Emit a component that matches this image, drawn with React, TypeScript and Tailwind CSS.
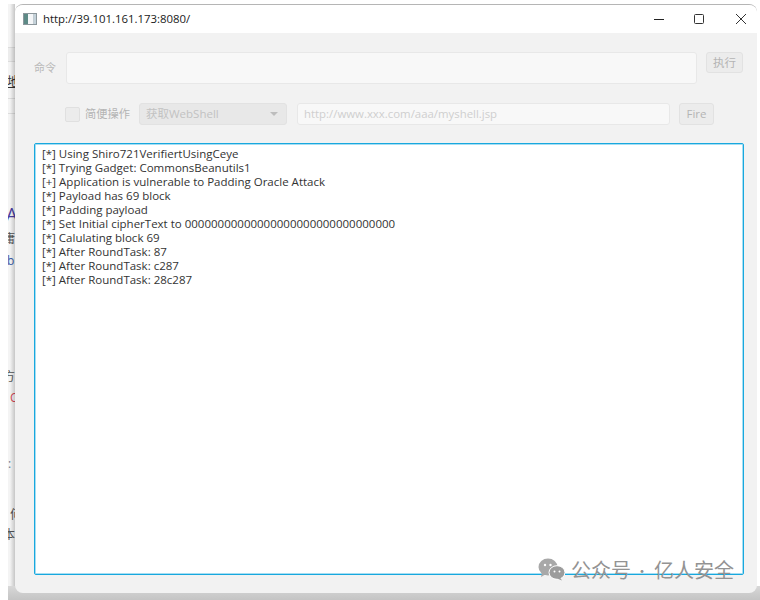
const LINES = [
  "[*] Using Shiro721VerifiertUsingCeye",
  "[*] Trying Gadget: CommonsBeanutils1",
  "[+] Application is vulnerable to Padding Oracle Attack",
  "[*] Payload has 69 block",
  "[*] Padding payload",
  "[*] Set Initial cipherText to 00000000000000000000000000000000",
  "[*] Calulating block 69",
  "[*] After RoundTask: 87",
  "[*] After RoundTask: c287",
  "[*] After RoundTask: 28c287",
];

const FONT = "font-['Open_Sans','Noto_Sans','Noto_Sans_CJK_SC',sans-serif]";

function Scrap({ className, children }: { className: string; children: string }) {
  return <span className={`absolute text-[12px] leading-[14px] ${className}`}>{children}</span>;
}

export default function App() {
  return (
    <div className={`relative h-[600px] w-[760px] overflow-hidden bg-white pl-[8px] ${FONT}`}>
      <div className="relative h-full w-full pb-[7px] pl-[7px] pr-[3px] pt-[4px]">
        <div className="absolute bottom-0 left-0 top-[4px] w-[7px] overflow-hidden bg-[#f4f4f4]">
          <div className="absolute left-0 right-0 top-[43px] h-[15px] border-y border-[#dcdcdc] bg-[#ececec]" />
          <div className="absolute left-0 right-0 top-[94px] h-[16px] border-y border-[#dcdcdc]" />
          <Scrap className="left-[-1px] top-[71px] text-[#333] underline">地</Scrap>
          <Scrap className="left-[-2px] top-[200px] text-[18px] leading-[20px] text-[#4b3fa0]">A</Scrap>
          <Scrap className="left-[-5px] top-[228px] text-[#555]">庸</Scrap>
          <Scrap className="left-[-1px] top-[250px] text-[#3b5ca8]">b</Scrap>
          <Scrap className="left-[-5px] top-[366px] text-[#555]">方</Scrap>
          <Scrap className="left-[2px] top-[387px] text-[#d84a5a]">C</Scrap>
          <Scrap className="left-[0px] top-[453px] text-[#6a7a90]">:</Scrap>
          <Scrap className="left-[2px] top-[504px] text-[#555]">何</Scrap>
          <Scrap className="left-[-5px] top-[524px] text-[#555]">本</Scrap>
          <div className="absolute inset-y-0 right-0 w-[5px] bg-gradient-to-r from-transparent to-[#00000030]" />
        </div>
        <div className="absolute bottom-0 left-0 right-0 h-[14px] bg-gradient-to-b from-[#d8d8d8] to-[#c4c4c4]" />
        <div className="relative flex h-full flex-col overflow-hidden rounded-[8px] border-t border-[#b5b5b5] bg-[#f2f2f2]">
          <div className="flex h-[28px] shrink-0 items-center bg-white pl-[8px]">
            <svg width="14" height="12" viewBox="0 0 14 12" className="mr-[6px]">
              <rect x="0" y="0" width="14" height="12" fill="#8c979c" />
              <rect x="1" y="1" width="4" height="10" fill="#5d8a86" />
              <rect x="5" y="1" width="5.5" height="10" fill="#f4f6f8" />
              <rect x="10.5" y="1" width="2.5" height="10" fill="#c4d2da" />
            </svg>
            <span className="text-[11.4px] text-[#1a1a1a]">http://39.101.161.173:8080/</span>
            <div className="ml-auto flex items-center">
              <svg width="12" height="12" viewBox="0 0 12 12" className="mr-[28px]"><path d="M1 6.5h10" stroke="#222" strokeWidth="1" /></svg>
              <svg width="12" height="12" viewBox="0 0 12 12" className="mr-[30px]"><rect x="1.5" y="1.5" width="9" height="9" rx="1" fill="none" stroke="#333" strokeWidth="1" /></svg>
              <svg width="12" height="12" viewBox="0 0 12 12" className="mr-[10px]"><path d="M1 1l10 10M11 1L1 11" stroke="#333" strokeWidth="1" /></svg>
            </div>
          </div>
          <div className="flex flex-1 flex-col pb-[18px] pl-[19px] pr-[13px] pt-[19px]">
            <div className="flex items-start">
              <span className="mt-[8px] w-[32px] shrink-0 text-[11px] leading-[16px] text-[#b9b9b9]">命令</span>
              <div className="h-[32px] w-[631px] shrink-0 rounded-[3px] border border-[#e8e8e8] bg-[#f8f8f8]" />
              <div className="ml-[9px] flex h-[21px] w-[37px] shrink-0 items-center justify-center rounded-[3px] border border-[#e2e2e2] bg-[#ececec] text-[11.5px] text-[#b4b4b4]">执行</div>
            </div>
            <div className="ml-[31px] mt-[19px] flex h-[22px] items-center">
              <div className="h-[15px] w-[15px] shrink-0 rounded-[2px] border border-[#e0e0e0] bg-[#ececec]" />
              <span className="ml-[5px] w-[45px] shrink-0 whitespace-nowrap text-[11.25px] text-[#b4b4b4]">简便操作</span>
              <div className="ml-[9px] flex h-[22px] w-[148px] shrink-0 items-center justify-between rounded-[3px] border border-[#e2e2e2] bg-[#e8e8e8] pl-[6px] pr-[8px] text-[11.5px] text-[#c2c2c2]">
                <span>获取WebShell</span>
                <span className="h-0 w-0 border-x-[4px] border-t-[4px] border-x-transparent border-t-[#bdbdbd]" />
              </div>
              <div className="ml-[10px] flex h-[22px] w-[373px] shrink-0 items-center rounded-[3px] border border-[#e8e8e8] bg-[#f8f8f8] pl-[6px] text-[11.4px] text-[#cfcfcf]">http://www.xxx.com/aaa/myshell.jsp</div>
              <div className="ml-[9px] flex h-[22px] w-[35px] shrink-0 items-center justify-center rounded-[3px] border border-[#e2e2e2] bg-[#ececec] text-[11.5px] text-[#b4b4b4]">Fire</div>
            </div>
            <div className="mt-[18px] min-h-0 flex-1 rounded-[2px] border border-[#18a8de] bg-white px-[7px] pb-[4px] pt-[3px] text-[11.5px] leading-[14px] text-[#333] shadow-[inset_0_0_0_1px_#a6def3]">
              {LINES.map((l) => (
                <div key={l}>{l}</div>
              ))}
            </div>
          </div>
        </div>
      </div>
      <div className="absolute left-[538px] top-[558px] flex items-center">
        <svg width="27" height="23" viewBox="0 0 27 23">
          <ellipse cx="10" cy="9" rx="9.5" ry="8.5" fill="#a8a8a8" />
          <path d="M4 14l-1 5 5-3z" fill="#a8a8a8" />
          <ellipse cx="19" cy="14.5" rx="8" ry="6.8" fill="#9c9c9c" stroke="#fff" strokeWidth="1" />
          <path d="M22 19.5l2 3-5-2z" fill="#9c9c9c" />
          <circle cx="7" cy="7" r="1.2" fill="#fff" />
          <circle cx="12.5" cy="7" r="1.2" fill="#fff" />
          <circle cx="16.5" cy="13.5" r="1" fill="#fff" />
          <circle cx="21.5" cy="13.5" r="1" fill="#fff" />
        </svg>
        <div className="ml-[6px] flex items-center font-['Noto_Sans_CJK_SC',sans-serif] text-[20px] leading-[22px] text-[#939393]">
          <span>公众号</span>
          <span className="ml-[4px] mr-[5px] text-[14px]">·</span>
          <span>亿人安全</span>
        </div>
      </div>
    </div>
  );
}
